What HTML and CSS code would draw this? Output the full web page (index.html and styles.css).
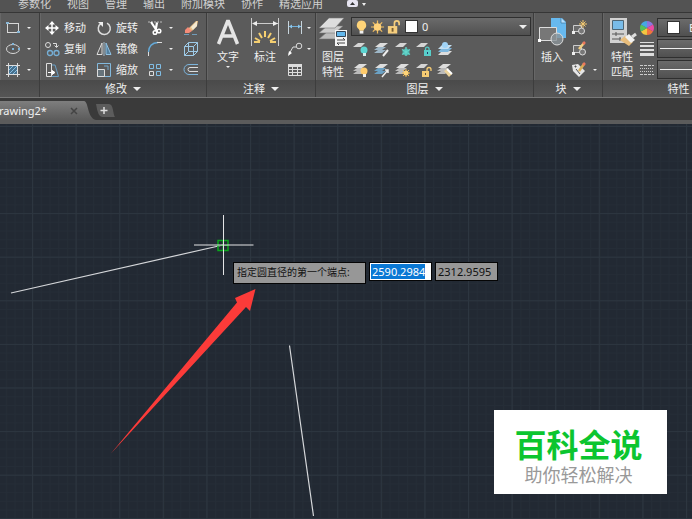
FILE: index.html
```html
<!DOCTYPE html>
<html lang="zh-CN">
<head>
<meta charset="utf-8">
<title>Drawing2</title>
<link rel="stylesheet" href="styles.css">
</head>
<body>
<nav class="menu">
  <a href="#">参数化</a><a href="#">视图</a><a href="#">管理</a><a href="#">输出</a><a href="#">附加模块</a><a href="#">协作</a><a href="#">精选应用</a>
  <button class="pill" aria-label="最小化"><svg width="20" height="8" viewBox="0 0 20 8"><rect x="0" y="0" width="11" height="7" rx="2" fill="#e6e4f0"/><path d="M3 5L5.500 2L8 5Z" fill="#333"/><path d="M15 3h4l-2 3z" fill="#eee"/></svg></button>
</nav>

<header class="ribbon">
  <section class="panel draw">
    <div class="body">
      <button class="tool" aria-label="矩形"><svg class="ic" viewBox="0 0 16 16"><rect x="2.500" y="3.500" width="11" height="9" fill="none" stroke="#d8d8d8"/><path d="M1 2h3v2H1zM12 11h3v2h-3z" fill="#8bb9d8"/></svg><i class="caret"></i></button>
      <button class="tool" aria-label="椭圆"><svg class="ic" viewBox="0 0 16 16"><ellipse cx="8" cy="8" rx="6.500" ry="4.500" fill="none" stroke="#d8d8d8"/><path d="M7 7h2v2H7zM7 2h2v2H7zM13 7h2v2h-2z" fill="#7fb5da"/></svg><i class="caret"></i></button>
      <button class="tool" aria-label="填充"><svg class="ic" viewBox="0 0 16 16"><path d="M4 4h8v8H4z" fill="#47718e"/><path d="M4 8l4-4M4 12l8-8M8 12l4-4" stroke="#88bfe4"/><path d="M3.500 1v14M12.500 1v14M1 3.500h14M1 12.500h14" stroke="#ddd" fill="none"/></svg><i class="caret"></i></button>
    </div>
    <h2></h2>
  </section>

  <section class="panel modify">
    <div class="body">
      <button class="tool"><svg class="ic" viewBox="0 0 16 16"><path d="M8 2v12M2 8h12" stroke="#fff" stroke-width="1.500"/><path d="M8 1l3 3.500H5zM8 15l3-3.500H5zM1 8l3.500-3v6zM15 8l-3.500-3v6z" fill="#fff"/></svg>移动</button>
      <button class="tool"><svg class="ic" viewBox="0 0 16 16"><path d="M5 3.500A6 6 0 1 0 11 3.200" fill="none" stroke="#ddd" stroke-width="1.500"/><path d="M2 2h5v5z" fill="#eee"/></svg>旋转</button>
      <button class="tool" aria-label="修剪"><svg class="ic" viewBox="0 0 16 16"><path d="M1 2h14" stroke="#bbb" stroke-dasharray="2 1"/><path d="M4 2l6 9M10 2.500L8.500 11" stroke="#fff" stroke-width="2.200"/><circle cx="8" cy="12.500" r="1.800" fill="none" stroke="#fff" stroke-width="1.500"/><circle cx="12" cy="11" r="1.800" fill="none" stroke="#fff" stroke-width="1.500"/></svg><i class="caret"></i></button>
      <button class="tool" aria-label="删除"><svg class="ic" viewBox="0 0 16 16"><path d="M1 14.500h14" stroke="#719cb9" stroke-dasharray="5 3"/><path d="M5 9L13 1h2l-1 5-5 5z" fill="#eac184"/><path d="M8 7l6-6v5l-4 4z" fill="#f4ead2"/><path d="M2 10l3-3 4 4-3 2H2z" fill="#f48c78"/></svg></button>

      <button class="tool"><svg class="ic" viewBox="0 0 16 16"><g fill="none" stroke="#ddd"><circle cx="4" cy="4" r="2.500"/><path d="M9 2.500h3.500V6M10.500 4.500l2 2 2-2"/></g><g fill="none" stroke="#76afd6" stroke-width="1.300"><circle cx="6" cy="12" r="2.500"/><circle cx="12.500" cy="12" r="2.500"/></g></svg>复制</button>
      <button class="tool"><svg class="ic" viewBox="0 0 16 16"><path d="M6 2v11.500H1z" fill="none" stroke="#ddd"/><path d="M10 2v11.500h5z" fill="#54809f" stroke="#8fc1e3"/><path d="M8 1v14" stroke="#a4bac9"/></svg>镜像</button>
      <button class="tool" aria-label="圆角"><svg class="ic" viewBox="0 0 16 16"><path d="M1.500 15V10" stroke="#ddd"/><path d="M1.500 11Q2 2 11 1.500" fill="none" stroke="#65aad8" stroke-width="1.300"/><path d="M10 1.500h5" stroke="#ddd"/></svg><i class="caret"></i></button>
      <button class="tool" aria-label="分解"><svg class="ic" viewBox="0 0 16 16"><g fill="none" stroke="#9ecbe8"><path d="M1.500 5.500h9v9h-9zM1.500 5.500l4-4h9l-4 4M14.500 1.500v9l-4 4M5.500 1.500v9h9M5.500 10.500l-4 4"/></g></svg></button>

      <button class="tool"><svg class="ic" viewBox="0 0 16 16"><path d="M2.500 1.500h5v13h-5z" fill="none" stroke="#ddd"/><path d="M8 3l3 0 3.500 11.500H8" fill="none" stroke="#699fc5"/><path d="M4 10.500h5M8 8.500l3 2-3 2z" stroke="#fff" fill="#fff"/></svg>拉伸</button>
      <button class="tool"><svg class="ic" viewBox="0 0 16 16"><path d="M1.500 1.500h13v13h-13z" fill="none" stroke="#83b9dd"/><path d="M1.500 7.500h7v7h-7z" fill="#66737b" stroke="#ddd"/><path d="M12 4v4M8 4h4" stroke="#74a7ca"/></svg>缩放</button>
      <button class="tool" aria-label="阵列"><svg class="ic" viewBox="0 0 16 16"><g fill="none"><path d="M2.500 2.500h4v4h-4zM9.500 2.500h4v4h-4z" stroke="#80bde4"/><path d="M9.500 9.500h4v4h-4z" stroke="#80bde4"/><path d="M2.500 9.500h4v4h-4z" stroke="#ddd"/></g></svg><i class="caret"></i></button>
      <button class="tool" aria-label="偏移"><svg class="ic" viewBox="0 0 16 16"><path d="M15 2.500H6a5 5 0 0 0 0 10h9" fill="none" stroke="#7bb4dc"/><path d="M15 5.500H7a2 2 0 0 0 0 4h8" fill="none" stroke="#ddd"/></svg></button>
    </div>
    <h2>修改<i class="caret big-caret"></i></h2>
  </section>

  <section class="panel annotate">
    <div class="body">
      <button class="big"><svg class="bi" viewBox="0 0 30 30"><path d="M5.500 27L14.500 4.500h1L24.500 27M9 19h12" fill="none" stroke="#e4e4e4" stroke-width="3.500"/></svg>文字<i class="caret"></i></button>
      <button class="big"><svg class="bi" viewBox="0 0 30 30"><path d="M1.500 1v28M28.500 1v28M3 6.500h25" stroke="#ccc"/><path d="M2 6.500l5-2.500v5zM28 6.500l-5-2.500v5z" fill="#eee"/><path d="M15 14v6M9 16l3 5M21 16l-3 5M5 21l5 3M25 21l-5 3M4 25h6M20 25h6" stroke="#f5cf70" stroke-width="2"/></svg>标注</button>
      <div class="stack">
        <button class="tool" aria-label="线性"><svg class="ic" viewBox="0 0 16 16"><path d="M1.500 1v13M14.500 1v13" stroke="#c8d5dd"/><path d="M2 6.500h12" stroke="#72b0da"/><path d="M2 6.500l3-2v4zM14 6.500l-3-2v4z" fill="#8ac5eb"/></svg><i class="caret"></i></button>
        <button class="tool" aria-label="引线"><svg class="ic" viewBox="0 0 16 16"><path d="M2 13L6 6h3" fill="none" stroke="#ddd"/><circle cx="12" cy="5" r="2.800" fill="none" stroke="#ddd"/><path d="M1 15l1-5 3 2z" fill="#fff"/></svg><i class="caret"></i></button>
        <button class="tool" aria-label="表格"><svg class="ic" viewBox="0 0 16 16"><path d="M1.500 2.500h13v11h-13zM1.500 7.500h13M1.500 10.500h13M5.500 5v8.500M10.500 5v8.500" fill="none" stroke="#ddd"/><path d="M1 2h14v3H1z" fill="#ddd"/></svg></button>
      </div>
    </div>
    <h2>注释<i class="caret big-caret"></i></h2>
  </section>

  <section class="panel layers">
    <div class="body">
      <button class="big"><svg class="bi" viewBox="0 0 30 30"><g stroke="#777" stroke-width=".6"><path d="M1 22l8-7h16l-8 7z" fill="#bbb"/><path d="M1 16l8-7h16l-8 7z" fill="#ccc"/><path d="M1 11L11 1h15l-9 10z" fill="#ddd"/></g><path d="M17 13h12v16H17z" fill="#f4f4f4"/><path d="M18.500 14.500h9v5h-9z" fill="#62b8ed" stroke="#345"/><path d="M19 23h8l-2-2M27 26h-8l2 2" fill="none" stroke="#444"/></svg>图层<br>特性</button>
      <div class="layer-tools">
        <label class="combo">
          <svg class="ic" viewBox="0 0 16 16"><path d="M8 1a5 5 0 0 1 3 9l-1 2H6l-1-2a5 5 0 0 1 3-9z" fill="#ffd478"/><path d="M6 12h4v3H6z" fill="#eee"/></svg>
          <svg class="ic" viewBox="0 0 16 16"><path d="M8 1v14M1 8h14M3 3l10 10M13 3L3 13" stroke="#f0bd60" stroke-width="1.300"/><circle cx="8" cy="8" r="4" fill="#ffd27a"/></svg>
          <svg class="ic" viewBox="0 0 16 16"><path d="M9 8V4a2.500 2.500 0 0 1 5 0v2" fill="none" stroke="#f6ce7d" stroke-width="1.800"/><path d="M2 7h10v8H2z" fill="#f6ce7d"/><path d="M6 9h2v4H6z" fill="#765d32"/></svg>
          <span class="swatch"></span>
          <select aria-label="图层"><option>0</option></select>
          <i class="caret big-caret"></i>
        </label>
        <div class="icon-grid">
          <button class="tool" aria-label="关"><svg class="ic" viewBox="0 0 16 16"><path d="M0 6l5-4h7L8 6z" fill="#d5d5d5"/><circle cx="11" cy="9" r="3.500" fill="#5cd5d2"/><path d="M10 12h3v3h-3z" fill="#d8ecec"/></svg></button>
          <button class="tool" aria-label="隔离"><svg class="ic" viewBox="0 0 16 16"><path d="M0 12l4-3h8l-4 3zM0 9l4-3h8L8 9z" fill="#9eb7c8"/><path d="M1 6l5-4h8l-5 4z" fill="#ddd"/><path d="M9 15l5-6" stroke="#eee" stroke-width="2"/></svg></button>
          <button class="tool" aria-label="冻结"><svg class="ic" viewBox="0 0 16 16"><path d="M0 6l5-4h7L8 6z" fill="#d5d5d5"/><circle cx="11" cy="11" r="3.500" fill="#4ab3ad"/><path d="M11 6v9M7 8.500l8 5M15 8.500l-8 5" stroke="#65d6cb" stroke-width="1.300"/></svg></button>
          <button class="tool" aria-label="锁定"><svg class="ic" viewBox="0 0 16 16"><path d="M0 6l5-4h7L8 6z" fill="#d5d5d5"/><path d="M9.500 10V8a1.800 1.800 0 0 1 3.600 0v2" fill="none" stroke="#55cbc6" stroke-width="1.300"/><path d="M8 9h7v6H8z" fill="#58ceca"/><path d="M11 11h1v2h-1z" fill="#236"/></svg></button>
          <button class="tool" aria-label="置为当前"><svg class="ic" viewBox="0 0 16 16"><path d="M1 14l4-4h10l-4 4z" fill="#ddd"/><path d="M1 11l4-4h10l-4 4z" fill="#7eb8df"/><path d="M1 8l4-4h10l-4 4z" fill="#c4dff1"/><circle cx="8" cy="4" r="3" fill="#a0d4f7"/></svg></button>
          <button class="tool" aria-label="开"><svg class="ic" viewBox="0 0 16 16"><path d="M0 12l4-3h8l-4 3zM0 9l4-3h8L8 9z" fill="#bbb"/><path d="M1 6l5-4h8l-5 4z" fill="#ddd"/><circle cx="11" cy="9" r="3.500" fill="#ffcb6b"/><path d="M10 12h3v3h-3z" fill="#eee"/></svg></button>
          <button class="tool" aria-label="取消隔离"><svg class="ic" viewBox="0 0 16 16"><path d="M0 12l4-3h8l-4 3zM0 9l4-3h8L8 9z" fill="#6ba1c4"/><path d="M1 6l5-4h8l-5 4z" fill="#ddd"/><path d="M8 15l6-7M11 8h3v3" fill="none" stroke="#eee" stroke-width="1.500"/></svg></button>
          <button class="tool" aria-label="解冻"><svg class="ic" viewBox="0 0 16 16"><path d="M0 12l4-3h8l-4 3zM0 9l4-3h8L8 9z" fill="#bbb"/><path d="M1 6l5-4h8l-5 4z" fill="#ddd"/><path d="M11 7v8M7 11h8M8 8l6 6M14 8l-6 6" stroke="#f4b94d"/><circle cx="11" cy="11" r="2.500" fill="#ffd477"/></svg></button>
          <button class="tool" aria-label="解锁"><svg class="ic" viewBox="0 0 16 16"><path d="M0 6l5-4h7L8 6z" fill="#d5d5d5"/><path d="M11 10V7.500a2 2 0 0 1 4 0V9" fill="none" stroke="#f7cc73" stroke-width="1.300"/><path d="M6 9h7v6H6z" fill="#f7cc73"/><path d="M9 11h1v2H9z" fill="#654"/></svg></button>
          <button class="tool" aria-label="匹配图层"><svg class="ic" viewBox="0 0 16 16"><path d="M0 12l4-3h8l-4 3zM0 9l4-3h8L8 9z" fill="#bbb"/><path d="M1 6l5-4h8l-5 4z" fill="#ddd"/><path d="M7 9l3-2 5 5-3 3z" fill="#ecd39c"/><path d="M10 7l5 5" stroke="#fff" stroke-width="2"/></svg></button>
        </div>
      </div>
    </div>
    <h2>图层<i class="caret big-caret"></i></h2>
  </section>

  <section class="panel block">
    <div class="body">
      <button class="big"><svg class="bi" viewBox="0 0 30 30"><path d="M14 1h11l4 4v16H14z" fill="#67b9ef"/><path d="M24 1v5h5" fill="#b7e0ff" stroke="#39759d" stroke-width=".7"/><path d="M2.500 10.500h17v13h-17z" fill="#777" stroke="#ddd"/><circle cx="20" cy="22" r="6" fill="#8b9499" fill-opacity=".8" stroke="#ddd"/><path d="M1 22h3v3H1z" fill="#fff"/></svg>插入</button>
      <div class="stack">
        <button class="tool" aria-label="创建"><svg class="ic" viewBox="0 0 16 16"><path d="M2.500 5.500h8v6h-8z" fill="#6b6b6b" stroke="#ccc"/><circle cx="10.500" cy="11" r="3" fill="#777" stroke="#ddd"/><path d="M1 11h3v3H1z" fill="#eee"/><path d="M12 0v8M8 4h8M9.500 1.500l5 5M14.500 1.500l-5 5" stroke="#f2c870"/></svg></button>
        <button class="tool" aria-label="编辑"><svg class="ic" viewBox="0 0 16 16"><path d="M2.500 4.500h8v7h-8z" fill="#6b6b6b" stroke="#ccc"/><circle cx="11.500" cy="11" r="3" fill="#777" stroke="#ddd"/><path d="M1 11h3v3H1z" fill="#eee"/><path d="M8 8l5-6" stroke="#f1ce82" stroke-width="2.500"/><path d="M12 3l2-2" stroke="#ee785d" stroke-width="2.500"/></svg></button>
        <button class="tool" aria-label="编辑属性"><svg class="ic" viewBox="0 0 16 16"><path d="M1 3l6-1 7 7-6 6-6-6z" fill="#e6e6e6"/><path d="M5 7l4 5M4 4h1v1H4z" stroke="#555" fill="#555"/><path d="M8 9l5-7" stroke="#d8ad57" stroke-width="2.500"/><path d="M12 3l2-2" stroke="#ee785d" stroke-width="2.500"/></svg><i class="caret"></i></button>
      </div>
    </div>
    <h2>块<i class="caret big-caret"></i></h2>
  </section>

  <section class="panel properties">
    <div class="body">
      <button class="big"><svg class="bi" viewBox="0 0 30 30"><path d="M3 1h17v25H3z" fill="#d1d1d1"/><path d="M5.500 3.500h11v9h-11z" fill="#79bce9" stroke="#4e6675"/><path d="M5 17h12M5 22h9M9 15v4M13 20v4" stroke="#555"/><path d="M13 23l5-4 8 6-4 4z" fill="#e8bd7b"/><path d="M18 20l4-3 6 6-4 3z" fill="#f2f2f2"/><path d="M25 20l4-3" stroke="#ddd" stroke-width="3"/></svg>特性<br>匹配</button>
      <div class="props">
        <div class="prop"><svg class="ic" viewBox="0 0 16 16"><g stroke-width="7" fill="none"><path d="M8 4.500A3.500 3.500 0 0 1 11 6.300" stroke="#8b76df"/><path d="M11 6.300A3.500 3.500 0 0 1 11 9.700" stroke="#eb4aa4"/><path d="M11 9.700A3.500 3.500 0 0 1 8 11.500" stroke="#f0743f"/><path d="M8 11.500A3.500 3.500 0 0 1 5 9.700" stroke="#f3c640"/><path d="M5 9.700A3.500 3.500 0 0 1 5 6.300" stroke="#55c25b"/><path d="M5 6.300A3.500 3.500 0 0 1 8 4.500" stroke="#46a8e3"/></g></svg><label class="combo"><span class="swatch"></span><select aria-label="颜色"><option>ByLayer</option></select></label></div>
        <div class="prop"><svg class="ic" viewBox="0 0 16 16"><path d="M1 1h14v1H1zM1 4h14v2H1zM1 8h14v2H1zM1 12h14v3H1z" fill="#ddd"/></svg><label class="combo"><span class="line"></span><select aria-label="线宽"><option>ByLayer</option></select></label></div>
        <div class="prop"><svg class="ic" viewBox="0 0 16 16"><path d="M1 3.500h14M1 12.500h14" stroke="#ccc" stroke-dasharray="3 1"/><path d="M1 6.500h14M1 9.500h14" stroke="#ccc" stroke-dasharray="1 1"/></svg><label class="combo"><span class="line"></span><select aria-label="线型"><option>ByLayer</option></select></label></div>
      </div>
    </div>
    <h2>特性<i class="caret big-caret"></i></h2>
  </section>
</header>

<div class="tabs">
  <div class="tab"><span>Drawing2*</span><button aria-label="关闭"><svg width="8" height="8" viewBox="0 0 8 8"><path d="M1 1l6 6M7 1L1 7" stroke="#444" stroke-width="1.500"/></svg></button></div>
  <svg class="tab-edge" width="12" height="19" viewBox="0 0 12 19"><defs><linearGradient id="te" x2="0" y2="1"><stop stop-color="#7e7e7e"/><stop offset="1" stop-color="#5b5b5b"/></linearGradient></defs><path d="M0 0C5 1 3 17 12 19H0z" fill="url(#te)"/></svg>
  <button class="new-tab" aria-label="新建"><svg width="20" height="15" viewBox="0 0 20 15"><path d="M0 1h13q3 0 4 6t2 7H6q-4 0-6-13z" fill="#5c5c5c"/><path d="M8 4v7M4.500 7.500h7" stroke="#ddd" stroke-width="1.500"/></svg></button>
</div>

<main class="canvas">
  <svg class="drawing" width="100%" height="100%">
    <defs>
      <pattern id="minor" width="8.720" height="8.720" patternUnits="userSpaceOnUse" x="32" y="45.500"><path d="M.5 0v8.720M0 .5h8.720" stroke="#252d37"/></pattern>
      <pattern id="major" width="43.600" height="43.600" patternUnits="userSpaceOnUse" x="32" y="45.500"><path d="M.5 0v43.600M0 .5h43.600" stroke="#2d3640"/></pattern>
    </defs>
    <rect width="100%" height="100%" fill="url(#minor)"/>
    <rect width="100%" height="100%" fill="url(#major)"/>
    <path d="M11 169L223 121M289.500 221.500L313.500 392" stroke="#d5d7da" stroke-width="1.200"/>
    <path d="M218 116.500h10v10h-10z" fill="none" stroke="#0aa81c" stroke-width="1.500"/>
    <path d="M218 121.500h10M223 116.500v10" stroke="#0aa81c"/>
    <path d="M194 121h59.500M223.500 91v60" stroke="#e4e5e6"/>
    <path d="M110.500 330L237 178.500L235 174L255.500 165L250 187L246 183Z" fill="#fc3b39"/>
  </svg>
  <form class="dynamic">
    <label for="px">指定圆直径的第一个端点:</label>
    <input id="px" class="selected" value="2590.2984">
    <input aria-label="Y" value="2312.9595">
  </form>
  <aside class="mark"><strong>百科全说</strong><span>助你轻松解决</span></aside>
</main>
</body>
</html>
```
FILE: styles.css
```css
* { box-sizing: border-box; }
body {
  margin: 0;
  height: 100vh;
  display: flex;
  flex-direction: column;
  overflow: hidden;
  background: #222933;
  color: #f0f0f0;
  font: 11px/16px "Noto Sans", "Noto Sans CJK SC", sans-serif;
}
svg { display: block; flex: none; }
button, select, input { font: inherit; color: inherit; border: 0; padding: 0; margin: 0; background: none; }
.caret {
  flex: none;
  border: 2px solid transparent;
  border-top-color: #eee;
  border-bottom: 0;
}
.big-caret { border-width: 4px; border-bottom: 0; }

.menu {
  flex: none;
  height: 12px;
  padding-left: 18px;
  display: flex;
  align-items: flex-end;
  gap: 16px;
  overflow: hidden;
  background: #535353;
}
.menu a { color: #d0d0d0; text-decoration: none; white-space: nowrap; }
.pill { align-self: flex-start; margin-left: 8px; }

.ribbon {
  flex: none;
  display: flex;
  overflow: hidden;
  border-top: 1px solid #363636;
  border-bottom: 1px solid #777;
  background: #5b5b5b;
}
.panel {
  flex: none;
  display: flex;
  flex-direction: column;
  border-right: 1px solid #3d3d3d;
  box-shadow: inset 1px 0 #676767;
}
.body { height: 67px; padding: 4px 4px 0; display: flex; }
.panel h2 {
  margin: 0;
  height: 17px;
  display: flex;
  align-items: center;
  justify-content: center;
  gap: 6px;
  font-size: 11px;
  font-weight: 400;
  background: linear-gradient(#4a4a4a, #555);
}
.tool { display: flex; align-items: center; gap: 4px; height: 21px; white-space: nowrap; }
.tool .caret { margin-left: 2px; }
.ic { width: 16px; height: 16px; }
.bi { width: 30px; height: 30px; margin-bottom: 2px; }
.big { display: flex; flex-direction: column; align-items: center; line-height: 15px; white-space: nowrap; }
.big .caret { margin-top: 2px; }
.stack { display: flex; flex-direction: column; }

.draw { width: 40px; }
.draw .body { flex-direction: column; padding-left: 5px; }
.modify { width: 167px; }
.modify .body { display: grid; grid-template-columns: 52px 51px 36px 20px; grid-template-rows: repeat(3, 21px); }
.annotate { width: 109px; }
.annotate .body { gap: 7px; padding: 4px 0 0 6px; }
.annotate .stack .tool { gap: 2px; }
.layers { width: 218px; }
.layers .body { gap: 3px; padding: 4px 2px 0; }
.layer-tools { flex: 1; }
.icon-grid { display: grid; grid-template-columns: repeat(5, 21px); padding: 2px 0 0 2px; }
.block { width: 69px; }
.block .body { gap: 4px; padding: 4px 0 0 3px; }
.properties { flex: 1 0 166px; min-width: 0; }
.properties .body { gap: 2px; }
.props { flex: 1; min-width: 0; }
.prop { display: flex; align-items: center; height: 21px; gap: 2px; }

.combo {
  flex: 1;
  min-width: 0;
  display: flex;
  align-items: center;
  height: 19px;
  padding: 0 3px 0 2px;
  gap: 1px;
  border: 1px solid #2f2f2f;
  background: linear-gradient(#6b6b6b, #505050);
}
.combo select { flex: 1; min-width: 0; appearance: none; padding-left: 3px; }
.swatch { flex: none; width: 13px; height: 13px; margin-left: 3px; background: #fff; border: 1px solid #333; }
.prop .swatch { margin-left: 7px; }
.prop select { padding-left: 8px; }
.line { flex: none; width: 64px; height: 1px; background: #eee; }
.combo .ic { width: 15px; }

.tabs {
  flex: none;
  height: 26px;
  padding-top: 3px;
  display: flex;
  align-items: center;
  border-bottom: 4px solid #5b5b5b;
  background: #3a3a3a;
}
.tab {
  flex: none;
  align-self: stretch;
  width: 84px;
  display: flex;
  align-items: center;
  justify-content: space-between;
  padding-right: 6px;
  background: linear-gradient(#7e7e7e, #5b5b5b);
}
.tab span { margin-left: -9px; }

.canvas { flex: 1; position: relative; overflow: hidden; }
.drawing { position: absolute; inset: 0; }
.dynamic {
  position: absolute;
  left: 233px;
  top: 138px;
  display: flex;
  align-items: flex-start;
  gap: 3px;
  color: #111;
}
.dynamic label, .dynamic input { border: 1px solid #050505; background: #979797; }
.dynamic label { width: 133px; height: 22px; padding: 1px 3px; font-size: 10px; white-space: nowrap; }
.dynamic input { width: 63px; height: 19px; padding: 0 2px; }
.dynamic .selected {
  color: #fff;
  background: linear-gradient(#0a78d4, #0a78d4) 1px 1px / 54px 15px no-repeat #fff;
}
.mark {
  position: absolute;
  right: 25px;
  bottom: 25px;
  width: 173px;
  height: 84px;
  padding: 14px 4px 0 0;
  display: flex;
  flex-direction: column;
  align-items: center;
  background: #fff;
  font-family: "Noto Sans CJK SC", sans-serif;
}
.mark strong { font-size: 32px; line-height: 38px; font-weight: 700; color: #0cc52f; }
.mark span { font-size: 18px; line-height: 24px; color: #999; }
```
